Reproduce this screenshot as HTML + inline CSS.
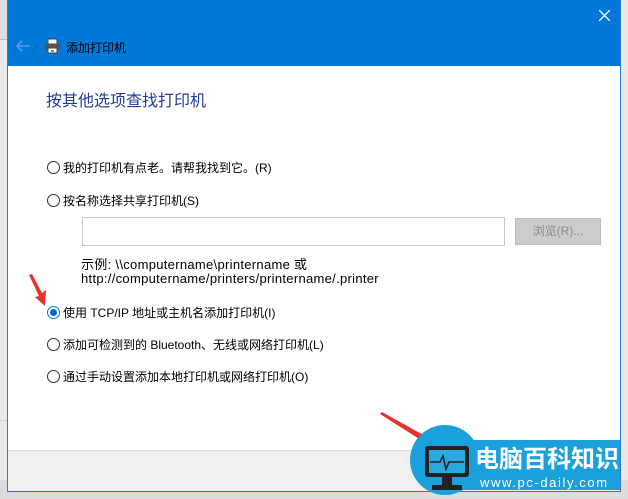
<!DOCTYPE html>
<html><head><meta charset="utf-8"><style>
*{margin:0;padding:0;box-sizing:border-box}
body{width:628px;height:499px;overflow:hidden;background:#e9e9e9;position:relative;font-family:"Liberation Sans","Noto Sans CJK SC",sans-serif;font-size:12px;color:#000}
.abs{position:absolute}
.win{left:7px;top:0;width:614px;height:492px;background:#fff;border:1px solid #2b79d0;border-top:none}
.hdr{left:0;top:0;width:612px;height:66px;background:#0078d7}
.ft{left:0;top:450px;width:612px;height:41px;background:#f0f0f0;border-top:1px solid #dcdcdc}
.r{width:13px;height:13px;border:1px solid #333;border-radius:50%;background:#fff}
.t{white-space:nowrap;font-size:12px}
</style></head><body>
<div class="abs" style="left:0;top:0;width:7px;height:39px;background:#dedede"></div>
<div class="abs" style="left:0;top:39px;width:7px;height:1px;background:#bbb"></div>
<div class="abs" style="left:0;top:420px;width:7px;height:1px;background:#ccc"></div>
<div class="abs" style="left:0;top:480px;width:628px;height:19px;background:#dcdcdc"></div>
<div class="abs win">
 <div class="abs hdr">
  <svg class="abs" style="left:7px;top:40px" width="16" height="12"><path d="M15 6H2M7 1L2 6l5 5" stroke="#5a9be0" stroke-width="1.6" fill="none"/></svg>
  <svg class="abs" style="left:36px;top:38px" width="17" height="16"><rect x="4" y="1" width="9" height="5" fill="#fff" stroke="#444"/><rect x="1" y="6" width="15" height="6" fill="#555"/><rect x="4" y="10" width="9" height="5" fill="#fff" stroke="#444"/><rect x="7" y="12" width="3" height="2" fill="#3a8"/></svg>
  <div class="abs t" style="left:58px;top:39px;font-size:12px;color:#000">添加打印机</div>
  <svg class="abs" style="left:591px;top:10px" width="11" height="11"><path d="M0 0L11 11M11 0L0 11" stroke="#fff" stroke-width="1.3"/></svg>
 </div>
 <div class="abs t" style="left:38px;top:87px;font-size:16px;color:#1f3d9a">按其他选项查找打印机</div>
 <div class="abs r" style="left:39px;top:161px"></div><div class="abs t" style="left:55px;top:159px">我的打印机有点老。请帮我找到它。(R)</div>
 <div class="abs r" style="left:39px;top:194px"></div><div class="abs t" style="left:55px;top:192px">按名称选择共享打印机(S)</div>
 <div class="abs" style="left:74px;top:217px;width:423px;height:29px;border:1px solid #c8c8c8"></div>
 <div class="abs" style="left:507px;top:218px;width:86px;height:27px;background:#ccc;border:1px solid #bdbdbd;color:#888;text-align:center;line-height:25px">浏览(R)...</div>
 <div class="abs t" style="left:73px;top:254px;font-size:13px;letter-spacing:0.3px">示例: \\computername\printername 或</div>
 <div class="abs t" style="left:73px;top:271px;font-size:13px;letter-spacing:0.3px">http://computername/printers/printername/.printer</div>
 <div class="abs r" style="left:39px;top:306px;border-color:#0078d7"><div class="abs" style="left:2px;top:2px;width:7px;height:7px;border-radius:50%;background:#0b63c7"></div></div>
 <div class="abs t" style="left:55px;top:304px">使用 TCP/IP 地址或主机名添加打印机(I)</div>
 <div class="abs r" style="left:39px;top:338px"></div><div class="abs t" style="left:55px;top:336px">添加可检测到的 Bluetooth、无线或网络打印机(L)</div>
 <div class="abs r" style="left:39px;top:370px"></div><div class="abs t" style="left:55px;top:368px">通过手动设置添加本地打印机或网络打印机(O)</div>
 <div class="abs ft"></div>
</div>
<svg class="abs" style="left:0;top:0" width="628" height="499">
 <path d="M29 275L32 274L42 293L46 290L45 306L35 297L39 296Z" fill="#e8312a"/>
 <path d="M380 414L382 412L427 437L429 433L436 446L421 446L424 442Z" fill="#e8312a"/>
 <rect x="440" y="440" width="180" height="50" fill="#1ba0dc"/>
 <circle cx="445" cy="460" r="35" fill="#1ba0dc"/>
 <rect x="425" y="446" width="44" height="31" rx="3" fill="#222"/>
 <rect x="429" y="450" width="36" height="23" fill="#2aa8e0"/>
 <path d="M430 462H440L443 456L446 469L449 462H464" stroke="#222" stroke-width="1.6" fill="none"/>
 <rect x="442" y="477" width="10" height="8" fill="#222"/><rect x="432" y="485" width="30" height="5" fill="#222"/>
</svg>
<div class="abs t" style="left:475px;top:446px;font-size:24px;line-height:28px;font-weight:bold;color:#fff;letter-spacing:0px">电脑百科知识</div>
<div class="abs t" style="left:480px;top:476px;font-size:13px;line-height:14px;color:#fff;letter-spacing:1.6px">www.pc-daily.com</div>
</body></html>
